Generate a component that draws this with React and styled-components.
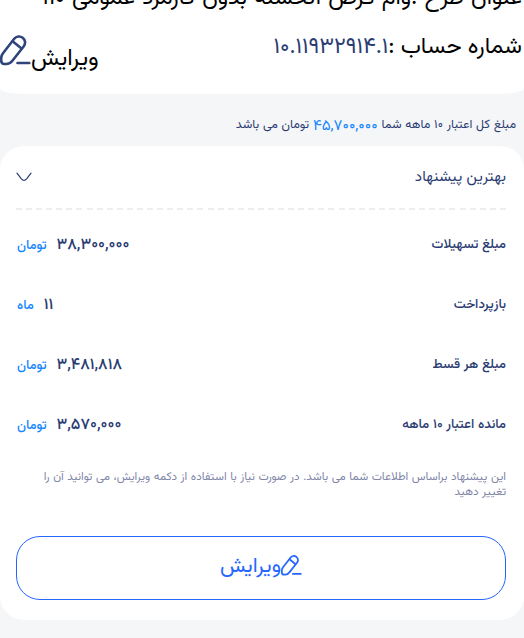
import React from "react";
import styled, { createGlobalStyle } from "styled-components";

const GlobalStyle = createGlobalStyle`
  * { box-sizing: border-box; }
  body {
    margin: 0;
    background: #f5f6f8;
    font-family: Vazirmatn, "DejaVu Sans", sans-serif;
    color: #2a3c72;
    overflow: hidden;
  }
`;

const Page = styled.main`
  direction: rtl;
  height: 638px;
  overflow: hidden;
  display: flex;
  flex-direction: column;
`;

const Header = styled.header`
  height: 94px;
  flex: none;
  background: #fff;
  border-radius: 0 0 24px 24px / 0 0 6px 6px;
  padding-right: 2px;
  color: #000;
  font-size: 23px;
  font-weight: 450;
  white-space: nowrap;
  overflow: hidden;
`;

const PlanTitle = styled.div`
  height: 24px;
  line-height: 36px;
  margin-top: -20px;
  word-spacing: 1.1px;
`;

const AccountRow = styled.div`
  display: flex;
  justify-content: space-between;
  margin-top: 25px;
`;

const Account = styled.div`
  line-height: 36px;
`;

const AccountNumber = styled.bdi`
  color: #2a3c72;
  font-size: 22.4px;
`;

const EditLink = styled.div`
  display: flex;
  align-items: flex-start;
  padding-top: 6px;
`;

const EditLabel = styled.span`
  font-size: 23.4px;
  line-height: 36px;
  padding-top: 7px;
`;

const Summary = styled.p`
  margin: 0;
  height: 52px;
  flex: none;
  padding: 18px 8px 0 0;
  font-size: 12.4px;
  line-height: 24px;
  white-space: nowrap;
  word-spacing: 0.5px;
`;

const Highlight = styled.bdi`
  position: relative;
  top: 2px;
  color: #1586ff;
  font-size: 15.2px;
`;

const Card = styled.section`
  height: 474px;
  flex: none;
  padding: 0 18px 0 16px;
  background: #fff;
  border-radius: 24px;
`;

const CardHeader = styled.div`
  display: flex;
  align-items: center;
  justify-content: space-between;
  height: 62px;
  padding-bottom: 1px;
  font-size: 15.2px;
`;

const Divider = styled.div`
  height: 2px;
  margin-bottom: 4px;
  background: repeating-linear-gradient(to right, #eee 0 6px, transparent 6px 10.08px);
`;

const DetailRow = styled.div`
  display: flex;
  align-items: center;
  justify-content: space-between;
  height: 60px;
`;

const Label = styled.span`
  font-size: 13.3px;
  font-weight: 500;
  word-spacing: 0.2px;
`;

const Amount = styled.span`
  display: flex;
  align-items: center;
  gap: 10px;
  padding: 3px 0 0 1px;
  font-size: 16px;
  font-weight: 500;
`;

const Unit = styled.span`
  color: #1586ff;
  font-size: 13.1px;
  font-weight: 500;
`;

const Note = styled.p`
  margin: 16px 0 0;
  height: 66px;
  color: #7f86a8;
  font-size: 11.6px;
  line-height: 15px;
  white-space: nowrap;
  word-spacing: 0.5px;
`;

const EditButton = styled.button`
  display: flex;
  align-items: center;
  justify-content: center;
  width: 490px;
  height: 64px;
  padding: 0 0 2px;
  border: 1px solid #2566ff;
  border-radius: 24px;
  background: #fff;
  color: #2566ff;
  font: 400 21.2px/30px Vazirmatn, "DejaVu Sans", sans-serif;
`;

const Icon = styled.svg`
  flex: none;
  fill: none;
  stroke: ${(p) => p.$color};
  stroke-width: ${(p) => p.$stroke};
  stroke-linecap: round;
  stroke-linejoin: round;
  margin-bottom: ${(p) => p.$lift || 0}px;
`;

const PenIcon = ({ size, color, stroke, lift }) => (
  <Icon width={size} height={size} viewBox="0 0 31 31" $color={color} $stroke={stroke} $lift={lift}>
    <path d="M14.2 3.8A6 6 0 0 1 23.8 11.2L12.4 25.7Q9.8 29 6.3 29H4.4Q1.2 29 1.2 25.5V23.4Q1.2 20.5 3 18.2Z" />
    <path d="M12.6 6.3L21.5 13.6M17.5 28H29.3" />
  </Icon>
);

const details = [
  { label: "مبلغ تسهیلات", value: "۳۸,۳۰۰,۰۰۰", unit: "تومان" },
  { label: "بازپرداخت", value: "۱۱", unit: "ماه" },
  { label: "مبلغ هر قسط", value: "۳,۴۸۱,۸۱۸", unit: "تومان" },
  { label: "مانده اعتبار ۱۰ ماهه", value: "۳,۵۷۰,۰۰۰", unit: "تومان" },
];

export default function App() {
  return (
    <Page>
      <GlobalStyle />
      <Header>
        <PlanTitle>عنوان طرح :وام قرض الحسنه بدون کارمزد عمومی ۱۱۰</PlanTitle>
        <AccountRow>
          <Account>
            شماره حساب :<AccountNumber>۱۰.۱۱۹۳۲۹۱۴.۱</AccountNumber>
          </Account>
          <EditLink>
            <EditLabel>ویرایش</EditLabel>
            <PenIcon size={31} color="#2f457c" stroke={2.6} />
          </EditLink>
        </AccountRow>
      </Header>
      <Summary>
        مبلغ کل اعتبار ۱۰ ماهه شما <Highlight>۴۵,۷۰۰,۰۰۰</Highlight> تومان می باشد
      </Summary>
      <Card>
        <CardHeader>
          <span>بهترین پیشنهاد</span>
          <Icon width="16" height="10" viewBox="0 0 16 10" $color="#2a3c72" $stroke={1.2}>
            <path d="M1 1.2L5.4 6.8Q8 9.8 10.6 6.8L15 1.2" />
          </Icon>
        </CardHeader>
        <Divider />
        {details.map(({ label, value, unit }) => (
          <DetailRow key={label}>
            <Label>{label}</Label>
            <Amount>
              <bdi>{value}</bdi>
              <Unit>{unit}</Unit>
            </Amount>
          </DetailRow>
        ))}
        <Note>
          این پیشنهاد براساس اطلاعات شما می باشد. در صورت نیاز با استفاده از دکمه ویرایش، می توانید آن را
          <br />
          تغییر دهید
        </Note>
        <EditButton>
          <PenIcon size={21} color="#2566ff" stroke={2.6} lift={3} />
          ویرایش
        </EditButton>
      </Card>
    </Page>
  );
}
